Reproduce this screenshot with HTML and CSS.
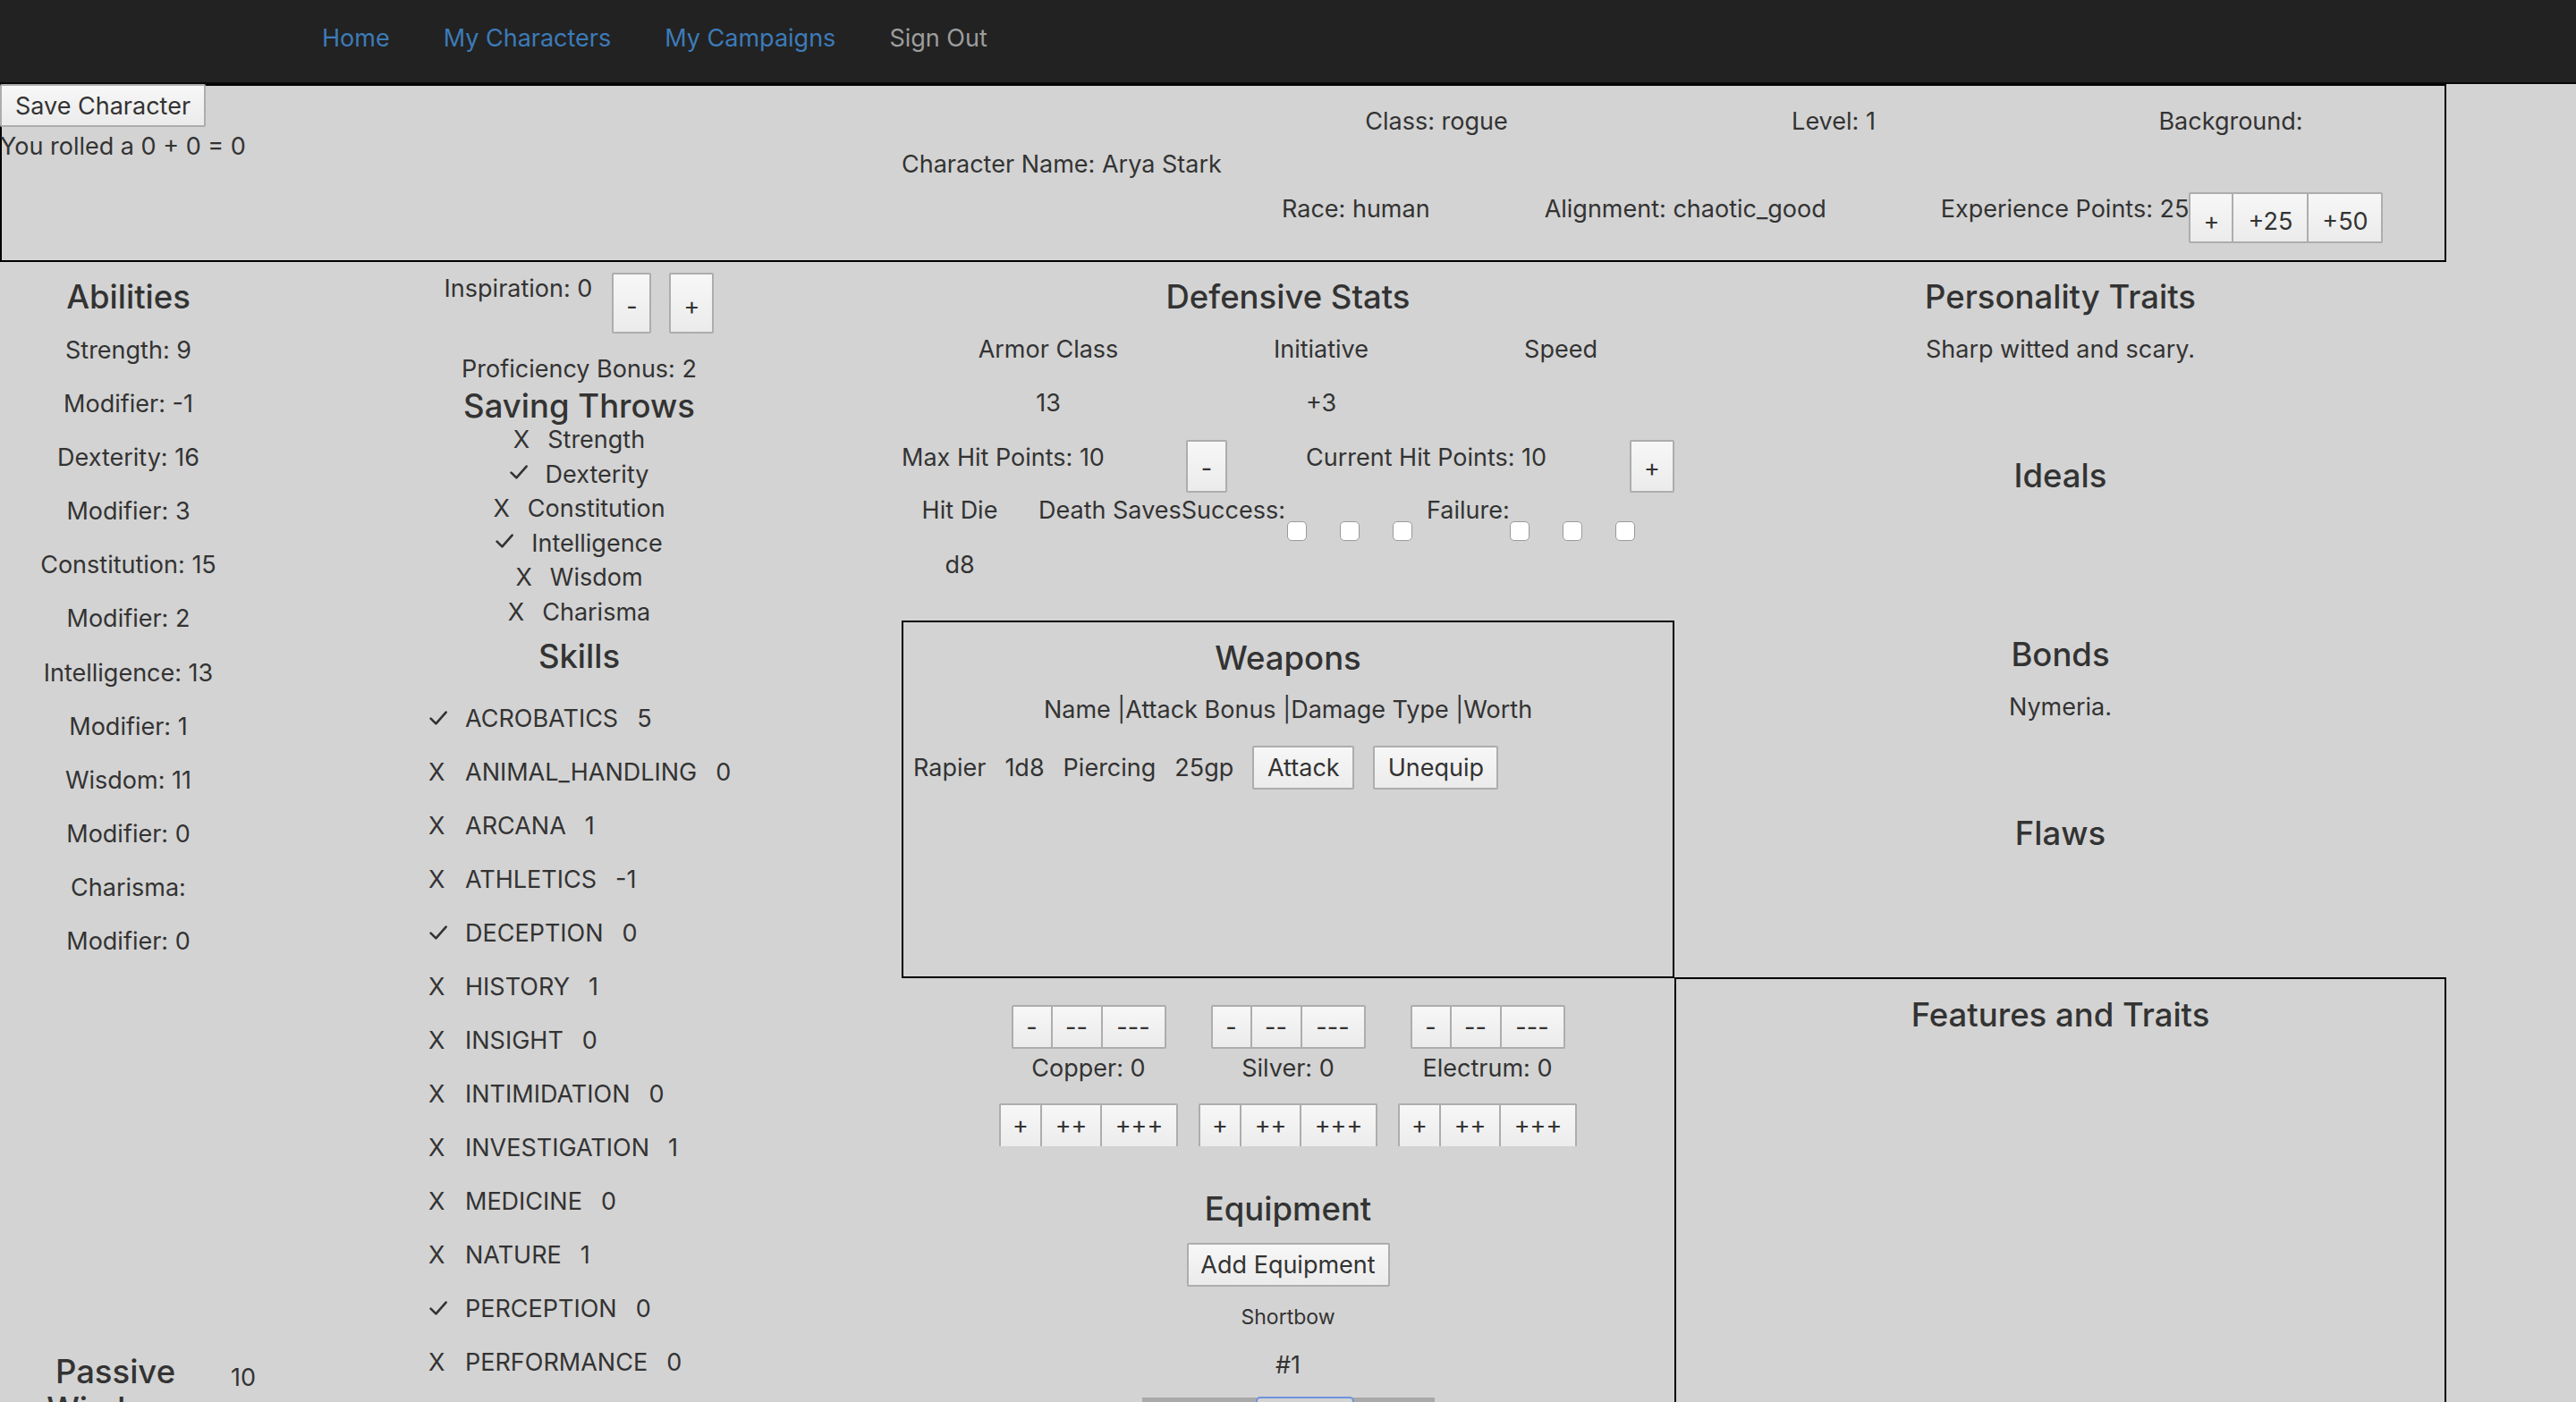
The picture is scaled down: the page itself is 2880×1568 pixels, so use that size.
FILE: index.html
```html
<!DOCTYPE html>
<html lang="en">
<head>
<meta charset="utf-8">
<title>Character Sheet</title>
<link rel="stylesheet" href="styles.css">
</head>
<body>
<nav class="navbar">
  <ul class="nav-links">
    <li><a class="nav-link" href="#">Home</a></li>
    <li><a class="nav-link" href="#">My Characters</a></li>
    <li><a class="nav-link" href="#">My Campaigns</a></li>
    <li><a class="nav-link muted" href="#">Sign Out</a></li>
  </ul>
</nav>

<main class="sheet">
  <section class="header-box">
    <div class="header-left">
      <button class="btn save-btn">Save Character</button>
      <p class="rolled">You rolled a 0 + 0 = 0</p>
    </div>
    <div class="header-right">
      <div class="hrow hrow-1">
        <span class="hcell">Class: rogue</span>
        <span class="hcell">Level: 1</span>
        <span class="hcell">Background:</span>
      </div>
      <div class="hrow hrow-2">Character Name: Arya Stark</div>
      <div class="hrow hrow-3">
        <span class="hitem">Race: human</span>
        <span class="hitem">Alignment: chaotic_good</span>
        <span class="xp">
          <span class="hitem">Experience Points: 25</span>
          <span class="btn-group xp-group">
            <button class="btn xp-1">+</button><button class="btn xp-25">+25</button><button class="btn xp-50">+50</button>
          </span>
        </span>
      </div>
    </div>
  </section>

  <div class="columns">
    <!-- Abilities -->
    <section class="col col-abilities">
      <h3 class="sec-title">Abilities</h3>
      <p class="stat">Strength: 9</p>
      <p class="stat">Modifier: -1</p>
      <p class="stat">Dexterity: 16</p>
      <p class="stat">Modifier: 3</p>
      <p class="stat">Constitution: 15</p>
      <p class="stat">Modifier: 2</p>
      <p class="stat">Intelligence: 13</p>
      <p class="stat">Modifier: 1</p>
      <p class="stat">Wisdom: 11</p>
      <p class="stat">Modifier: 0</p>
      <p class="stat">Charisma:</p>
      <p class="stat">Modifier: 0</p>
      <div class="passive">
        <h3 class="passive-label">Passive Wisdom:</h3>
        <span class="passive-value">10</span>
      </div>
    </section>

    <!-- Saves & skills -->
    <section class="col col-skills">
      <div class="insp">
        <span>Inspiration: 0</span>
        <button class="btn insp-minus">-</button>
        <button class="btn insp-plus">+</button>
      </div>
      <p class="prof">Proficiency Bonus: 2</p>
      <h3 class="sec-title tight">Saving Throws</h3>
      <ul class="saves">
        <li><span class="mark">X</span>Strength</li>
        <li><svg class="mark check" viewBox="0 0 20 16" width="20" height="16" role="img" aria-label="proficient"><path d="M1.6 8.6 L7.4 14.4 L18.6 1.6"/></svg>Dexterity</li>
        <li><span class="mark">X</span>Constitution</li>
        <li><svg class="mark check" viewBox="0 0 20 16" width="20" height="16" role="img" aria-label="proficient"><path d="M1.6 8.6 L7.4 14.4 L18.6 1.6"/></svg>Intelligence</li>
        <li><span class="mark">X</span>Wisdom</li>
        <li><span class="mark">X</span>Charisma</li>
      </ul>
      <h3 class="sec-title tight skills-title">Skills</h3>
      <ul class="skills">
        <li><span class="mark"><svg class="check" viewBox="0 0 20 16" width="20" height="16" role="img" aria-label="proficient"><path d="M1.6 8.6 L7.4 14.4 L18.6 1.6"/></svg></span><span class="sk-name">ACROBATICS</span><span class="sk-val">5</span></li>
        <li><span class="mark">X</span><span class="sk-name">ANIMAL_HANDLING</span><span class="sk-val">0</span></li>
        <li><span class="mark">X</span><span class="sk-name">ARCANA</span><span class="sk-val">1</span></li>
        <li><span class="mark">X</span><span class="sk-name">ATHLETICS</span><span class="sk-val">-1</span></li>
        <li><span class="mark"><svg class="check" viewBox="0 0 20 16" width="20" height="16" role="img" aria-label="proficient"><path d="M1.6 8.6 L7.4 14.4 L18.6 1.6"/></svg></span><span class="sk-name">DECEPTION</span><span class="sk-val">0</span></li>
        <li><span class="mark">X</span><span class="sk-name">HISTORY</span><span class="sk-val">1</span></li>
        <li><span class="mark">X</span><span class="sk-name">INSIGHT</span><span class="sk-val">0</span></li>
        <li><span class="mark">X</span><span class="sk-name">INTIMIDATION</span><span class="sk-val">0</span></li>
        <li><span class="mark">X</span><span class="sk-name">INVESTIGATION</span><span class="sk-val">1</span></li>
        <li><span class="mark">X</span><span class="sk-name">MEDICINE</span><span class="sk-val">0</span></li>
        <li><span class="mark">X</span><span class="sk-name">NATURE</span><span class="sk-val">1</span></li>
        <li><span class="mark"><svg class="check" viewBox="0 0 20 16" width="20" height="16" role="img" aria-label="proficient"><path d="M1.6 8.6 L7.4 14.4 L18.6 1.6"/></svg></span><span class="sk-name">PERCEPTION</span><span class="sk-val">0</span></li>
        <li><span class="mark">X</span><span class="sk-name">PERFORMANCE</span><span class="sk-val">0</span></li>
      </ul>
    </section>

    <!-- Defensive stats, weapons, coins, equipment -->
    <section class="col col-combat">
      <h3 class="sec-title">Defensive Stats</h3>
      <div class="def-grid">
        <span>Armor Class</span><span>Initiative</span><span>Speed</span>
        <span>13</span><span>+3</span><span></span>
      </div>
      <div class="hp-row">
        <span class="hp-max">Max Hit Points: 10</span>
        <button class="btn hp-btn">-</button>
        <span class="hp-cur">Current Hit Points: 10</span>
        <button class="btn hp-btn hp-plus">+</button>
      </div>
      <div class="hd-row">
        <div class="hd-cell">
          <span>Hit Die</span>
          <span class="hd-val">d8</span>
        </div>
        <span class="ds-label">Death SavesSuccess:</span>
        <span class="cbs">
          <input type="checkbox" class="cb" aria-label="success 1"><input type="checkbox" class="cb" aria-label="success 2"><input type="checkbox" class="cb" aria-label="success 3">
        </span>
        <span class="fail-label">Failure:</span>
        <span class="cbs">
          <input type="checkbox" class="cb" aria-label="failure 1"><input type="checkbox" class="cb" aria-label="failure 2"><input type="checkbox" class="cb" aria-label="failure 3">
        </span>
      </div>

      <div class="weapons-box">
        <h3 class="sec-title">Weapons</h3>
        <p class="w-head">Name |Attack Bonus |Damage Type |Worth</p>
        <div class="w-row">
          <span>Rapier</span><span>1d8</span><span>Piercing</span><span>25gp</span>
          <button class="btn w-attack">Attack</button>
          <button class="btn w-unequip">Unequip</button>
        </div>
      </div>

      <div class="coins">
        <div class="coin">
          <div class="btn-group"><button class="btn m1">-</button><button class="btn m2">--</button><button class="btn m3">---</button></div>
          <span class="coin-label">Copper: 0</span>
          <div class="plus-clip"><div class="btn-group"><button class="btn p1">+</button><button class="btn p2">++</button><button class="btn p3">+++</button></div></div>
        </div>
        <div class="coin">
          <div class="btn-group"><button class="btn m1">-</button><button class="btn m2">--</button><button class="btn m3">---</button></div>
          <span class="coin-label">Silver: 0</span>
          <div class="plus-clip"><div class="btn-group"><button class="btn p1">+</button><button class="btn p2">++</button><button class="btn p3">+++</button></div></div>
        </div>
        <div class="coin">
          <div class="btn-group"><button class="btn m1">-</button><button class="btn m2">--</button><button class="btn m3">---</button></div>
          <span class="coin-label">Electrum: 0</span>
          <div class="plus-clip"><div class="btn-group"><button class="btn p1">+</button><button class="btn p2">++</button><button class="btn p3">+++</button></div></div>
        </div>
      </div>

      <div class="equipment">
        <h3 class="sec-title">Equipment</h3>
        <button class="btn add-eq">Add Equipment</button>
        <p class="eq-name">Shortbow</p>
        <p class="eq-num">#1</p>
        <div class="pager"><span class="pager-active"></span></div>
      </div>
    </section>

    <!-- Personality -->
    <section class="col col-traits">
      <div class="trait">
        <h3 class="sec-title">Personality Traits</h3>
        <p class="trait-text">Sharp witted and scary.</p>
      </div>
      <div class="trait">
        <h3 class="sec-title">Ideals</h3>
      </div>
      <div class="trait">
        <h3 class="sec-title">Bonds</h3>
        <p class="trait-text">Nymeria.</p>
      </div>
      <div class="trait">
        <h3 class="sec-title">Flaws</h3>
      </div>
      <div class="features-box">
        <h3 class="sec-title">Features and Traits</h3>
      </div>
    </section>
  </div>
</main>
</body>
</html>
```

FILE: styles.css
```css
html, body {
  margin: 0;
  padding: 0;
  background: #d3d3d3;
  overflow: hidden;
}

body {
  font-family: Inter, "Liberation Sans", "DejaVu Sans", sans-serif;
  font-size: 27px;
  line-height: 40px;
  color: #333;
}

p { margin: 0; }
ul { list-style: none; margin: 0; padding: 0; }

/* ---------- Navbar ---------- */
.navbar {
  background: #222;
  height: 92px;
  border-bottom: 2px solid #080808;
  display: flex;
  align-items: center;
  padding-left: 330px;
}
.nav-links { display: flex; margin-top: -6px; }
.nav-link {
  display: block;
  padding: 0 30px;
  color: #3d7bb8;
  text-decoration: none;
  line-height: 40px;
}
.nav-link.muted { color: #9d9d9d; }

/* ---------- Buttons ---------- */
.btn {
  font-family: inherit;
  font-size: 27px;
  color: #333;
  background: linear-gradient(#f7f7f7, #ebebeb);
  border: 2px solid #adadad;
  border-radius: 2px;
  padding: 0;
  margin: 0;
  line-height: 1;
}
.btn-group { display: inline-flex; }
.btn-group .btn + .btn { margin-left: -2px; }

/* ---------- Header ---------- */
.sheet { width: 2735px; }

.header-box {
  border: 2px solid #000;
  height: 199px;
  box-sizing: border-box;
  display: grid;
  grid-template-columns: 1006px 1fr;
}
.header-left {
  margin: -2px 0 0 -2px;
  display: flex;
  flex-direction: column;
  align-items: flex-start;
}
.save-btn { width: 230px; height: 48px; }
.rolled { white-space: nowrap; margin-top: 2px; }

.header-right { padding-top: 20px; }
.hrow { white-space: nowrap; }
.hrow-1 { display: flex; height: 48px; padding-left: 376px; }
.hcell { width: 444px; text-align: center; }
.hrow-2 { height: 50px; }
.hrow-3 {
  display: flex;
  align-items: flex-start;
  gap: 128px;
  padding-left: 425px;
}
.xp { display: flex; align-items: flex-start; }
.xp-group { margin-top: 1px; }
.xp-group .btn { height: 57px; padding-top: 8px; }
.xp-1 { width: 50px; }
.xp-25 { width: 86px; }
.xp-50 { width: 85px; }

/* ---------- Columns ---------- */
.columns {
  display: grid;
  grid-template-columns: 287px 721px 864px 863px;
  align-items: start;
}

.sec-title {
  font-size: 36.5px;
  font-weight: 500;
  line-height: 42px;
  margin: 18px 0;
  text-align: center;
  color: #333;
}

/* Abilities */
.col-abilities { text-align: center; }
.col-abilities > .sec-title { margin-bottom: 19px; }
.stat { margin-bottom: 20.1px; }
.passive {
  display: flex;
  align-items: flex-start;
  margin-top: 440px;
}
.passive-label {
  width: 258px;
  margin: 0;
  font-size: 36.5px;
  font-weight: 500;
  line-height: 42px;
  text-align: center;
}
.passive-value { padding-top: 8px; }

/* Check icon */
.check {
  fill: none;
  stroke: #333;
  stroke-width: 2.6;
  stroke-linecap: round;
  stroke-linejoin: round;
}

/* Saves & skills */
.col-skills { text-align: center; }
.insp {
  display: flex;
  justify-content: center;
  align-items: flex-start;
  margin-top: 10px;
}
.insp .btn { height: 68px; margin-top: 2px; padding-top: 6px; }
.insp-minus { width: 44px; margin-left: 22px; }
.insp-plus { width: 50px; margin-left: 20px; }
.prof { margin-top: 20px; }
.sec-title.tight { line-height: 38px; margin: 2px 0 0; }
.saves li { line-height: 38.6px; }
.saves .mark { display: inline-block; margin-right: 20px; }
.saves svg.mark { vertical-align: 4px; margin-right: 20px; }
.sec-title.skills-title { margin-top: 10px; }
.skills {
  margin-top: 31px;
  padding-left: 192px;
  text-align: left;
}
.skills li {
  display: flex;
  margin-bottom: 20px;
  white-space: nowrap;
}
.skills .mark { width: 41px; flex: none; }
.skills .mark .check { display: block; margin-top: 11px; margin-left: 1px; }
.sk-val { margin-left: 21px; }

/* Combat column */
.def-grid {
  display: grid;
  grid-template-columns: 328px 282px 254px;
  row-gap: 20px;
  text-align: center;
}
.hp-row {
  display: flex;
  align-items: flex-start;
  margin-top: 21px;
  height: 59px;
  white-space: nowrap;
}
.hp-max { width: 318px; }
.hp-btn { width: 46px; height: 59px; padding-top: 4px; }
.hp-cur { margin-left: 88px; }
.hp-plus { margin-left: auto; width: 50px; }

.hd-row {
  display: flex;
  align-items: flex-start;
  white-space: nowrap;
}
.hd-cell {
  width: 130px;
  display: flex;
  flex-direction: column;
  align-items: center;
  gap: 21px;
}
.ds-label { margin-left: 23px; width: 275px; }
.cbs { display: flex; gap: 37px; margin-top: 32px; margin-left: 3px; }
.cb {
  appearance: none;
  -webkit-appearance: none;
  width: 22px;
  height: 22px;
  margin: 0;
  background: #fff;
  border: 1px solid #9a9a9a;
  border-radius: 5px;
  box-sizing: border-box;
}
.fail-label { margin-left: 16px; width: 90px; }

.weapons-box {
  margin-top: 42px;
  height: 400px;
  box-sizing: border-box;
  border: 2px solid #000;
}
.weapons-box .sec-title { margin: 19px 0 17px; }
.w-head { text-align: center; }
.w-row {
  display: flex;
  align-items: center;
  gap: 21px;
  padding-left: 11px;
  margin-top: 20px;
  white-space: nowrap;
}
.w-row .btn { height: 49px; }
.w-attack { width: 114px; }
.w-unequip { width: 140px; }

.coins {
  display: grid;
  grid-template-columns: repeat(3, 223px);
  justify-content: center;
  margin-top: 30px;
}
.coin {
  display: flex;
  flex-direction: column;
  align-items: center;
}
.coin .btn { height: 49px; }
.m1 { width: 46px; }
.m2 { width: 58px; }
.m3 { width: 73px; }
.coin-label { margin-top: 2px; white-space: nowrap; }
.plus-clip { margin-top: 19px; height: 48px; overflow: hidden; }
.plus-clip .btn { height: 54px; padding-bottom: 6px; }
.p1 { width: 48px; }
.p2 { width: 69px; }
.p3 { width: 87px; }

.equipment {
  display: flex;
  flex-direction: column;
  align-items: center;
}
.equipment .sec-title { margin: 49px 0 0; }
.add-eq { margin-top: 17px; height: 49px; width: 227px; }
.eq-name { margin-top: 17px; font-size: 23px; line-height: 34px; }
.eq-num { margin-top: 17px; }
.pager {
  margin-top: 16px;
  width: 327px;
  height: 12px;
  border-top: 5px solid #a9a9a9;
  position: relative;
}
.pager-active {
  position: absolute;
  left: 127px;
  top: -6px;
  width: 110px;
  height: 14px;
  border: 2px solid #6d93db;
  border-radius: 5px 5px 0 0;
  background: #d3d3d3;
  box-sizing: border-box;
}

/* Traits column */
.col-traits { text-align: center; }
.trait { height: 200px; display: flow-root; }
.features-box {
  border: 2px solid #000;
  height: 560px;
  box-sizing: border-box;
}
.features-box .sec-title { margin-top: 19px; }
```
